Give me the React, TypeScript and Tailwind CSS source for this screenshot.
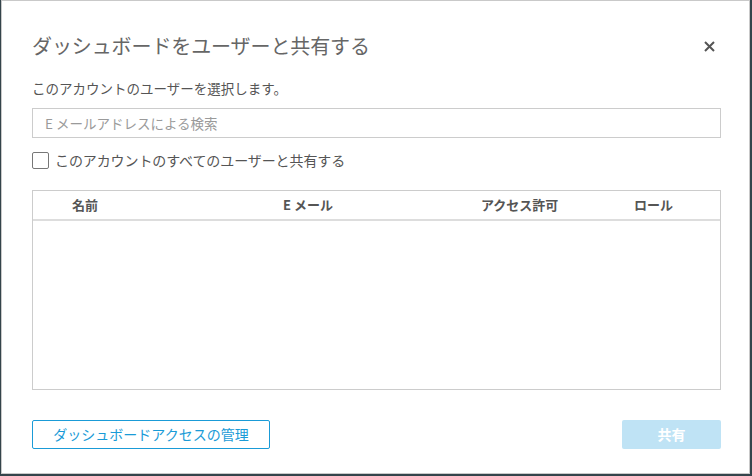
import React from "react";

const jp = { fontFamily: '"Noto Sans CJK JP", "Liberation Sans", sans-serif' };

const columns = [
  { label: "名前", cls: "pl-[39px]" },
  { label: "E メール", cls: "" },
  { label: "アクセス許可", cls: "" },
  { label: "ロール", cls: "" },
];

export default function App() {
  return (
    <div className="w-[752px] h-[476px] bg-[#34444b] overflow-hidden" style={jp}>
      <div className="ml-[1px] w-[749px] h-[474px] bg-white border border-[#c9c9c9] flex flex-col pl-[30px] pr-[28px]">
        {/* header */}
        <div className="flex items-center justify-between h-[44px] mt-[23px]">
          <h1 className="text-[20px] leading-none font-normal text-[#666666] tracking-[-0.1px]">
            ダッシュボードをユーザーと共有する
          </h1>
          <button className="mr-[6px] text-[#555555]" aria-label="close">
            <svg width="11" height="11" viewBox="0 0 11 11">
              <path d="M1 1 L10 10 M10 1 L1 10" stroke="currentColor" strokeWidth="2" />
            </svg>
          </button>
        </div>

        <p className="mt-[11px] text-[13.5px] leading-[18px] text-[#555555]">
          このアカウントのユーザーを選択します。
        </p>

        <input
          type="text"
          placeholder="E メールアドレスによる検索"
          className="mt-[11px] h-[30px] w-full border border-[#cccccc] px-3 text-[13.5px] text-[#555555] placeholder:text-[#9a9a9a] outline-none"
          style={jp}
        />

        <label className="mt-[13px] flex items-center gap-[6px] h-[18px]">
          <span className="w-[17px] h-[17px] border border-[#777777] rounded-[2px] bg-white shrink-0" />
          <span className="text-[14px] text-[#555555] tracking-[-0.1px]">
            このアカウントのすべてのユーザーと共有する
          </span>
        </label>

        {/* table */}
        <div className="mt-[21px] h-[200px] border border-[#cccccc] flex flex-col">
          <div className="grid grid-cols-[250px_198px_153px_1fr] h-[30px] items-center border-b-2 border-[#dddddd]">
            {columns.map((c) => (
              <div key={c.label} className={`text-[13px] font-bold text-[#555555] ${c.cls}`}>
                {c.label}
              </div>
            ))}
          </div>
          <div className="flex-1" />
        </div>

        {/* footer */}
        <div className="mt-[30px] flex items-center justify-between">
          <button className="w-[238px] h-[29px] border border-[#1a9bd7] rounded-[2px] text-[14px] text-[#1a9bd7] bg-white">
            ダッシュボードアクセスの管理
          </button>
          <button className="w-[99px] h-[29px] rounded-[2px] bg-[#bfe3f5] text-[14px] font-bold text-white">
            共有
          </button>
        </div>
      </div>
    </div>
  );
}
